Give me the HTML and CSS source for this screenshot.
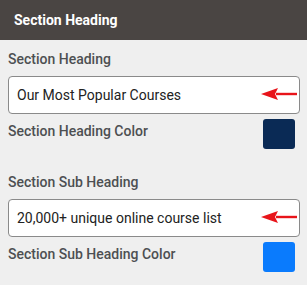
FILE: index.html
```html
<!DOCTYPE html>
<html lang="en">
<head>
  <meta charset="UTF-8" />
  <title>Section Heading</title>
  <link rel="stylesheet" href="styles.css">
</head>
<body>
  <div class="panel-header">Section Heading</div>

  <div class="panel-body">
    <div class="campo">
      <label class="campo-label">Section Heading</label>
      <div class="campo-input">
        <span>Our Most Popular Courses</span>
        <svg class="flecha" width="38" height="14" viewBox="0 0 38 14">
          <path d="M16 7 H37" stroke="#e8141a" stroke-width="2.4" />
          <path d="M1 7 L18 1 L15 7 L18 13 Z" fill="#e8141a" />
        </svg>
      </div>
    </div>
    <div class="color-row">
      <span class="campo-label">Section Heading Color</span>
      <span class="swatch swatch-navy"></span>
    </div>

    <div class="campo campo-sub">
      <label class="campo-label">Section Sub Heading</label>
      <div class="campo-input">
        <span>20,000+ unique online course list</span>
        <svg class="flecha" width="38" height="14" viewBox="0 0 38 14">
          <path d="M16 7 H37" stroke="#e8141a" stroke-width="2.4" />
          <path d="M1 7 L18 1 L15 7 L18 13 Z" fill="#e8141a" />
        </svg>
      </div>
    </div>
    <div class="color-row">
      <span class="campo-label">Section Sub Heading Color</span>
      <span class="swatch swatch-blue"></span>
    </div>
  </div>
</body>
</html>
```

FILE: styles.css
```css
* { box-sizing: border-box; }
body {
  margin: 0;
  background: #efefef;
  font-family: Roboto, 'Liberation Sans', sans-serif;
}

.panel-header {
  background: #4a4543;
  color: #fff;
  font-size: 14px;
  font-weight: 700;
  height: 40px;
  padding: 12px 14px 0;
  line-height: 17px;
}

.panel-body {
  padding: 9px 7px 0 8px;
}

.campo-label {
  display: block;
  color: #4d4f52;
  font-size: 14px;
  font-weight: 500;
  line-height: 20px;
}

.campo-input {
  margin-top: 7px;
  height: 38px;
  background: #fff;
  border: 1px solid #8a8a8a;
  border-radius: 4px;
  display: flex;
  align-items: center;
  justify-content: space-between;
  padding: 0 1px 0 8px;
  font-size: 14px;
  color: #222;
}

.flecha { margin-top: -2px; }

.color-row {
  display: flex;
  justify-content: space-between;
  align-items: flex-start;
  padding-right: 5px;
  margin-top: 5px;
}
.color-row .campo-label { margin-top: 2px; }

.swatch {
  width: 32px;
  height: 30px;
  border-radius: 3px;
}
.swatch-navy { background: #0a2a55; }
.swatch-blue { background: #0a7bfd; }

.campo-sub { margin-top: 23px; }
```
